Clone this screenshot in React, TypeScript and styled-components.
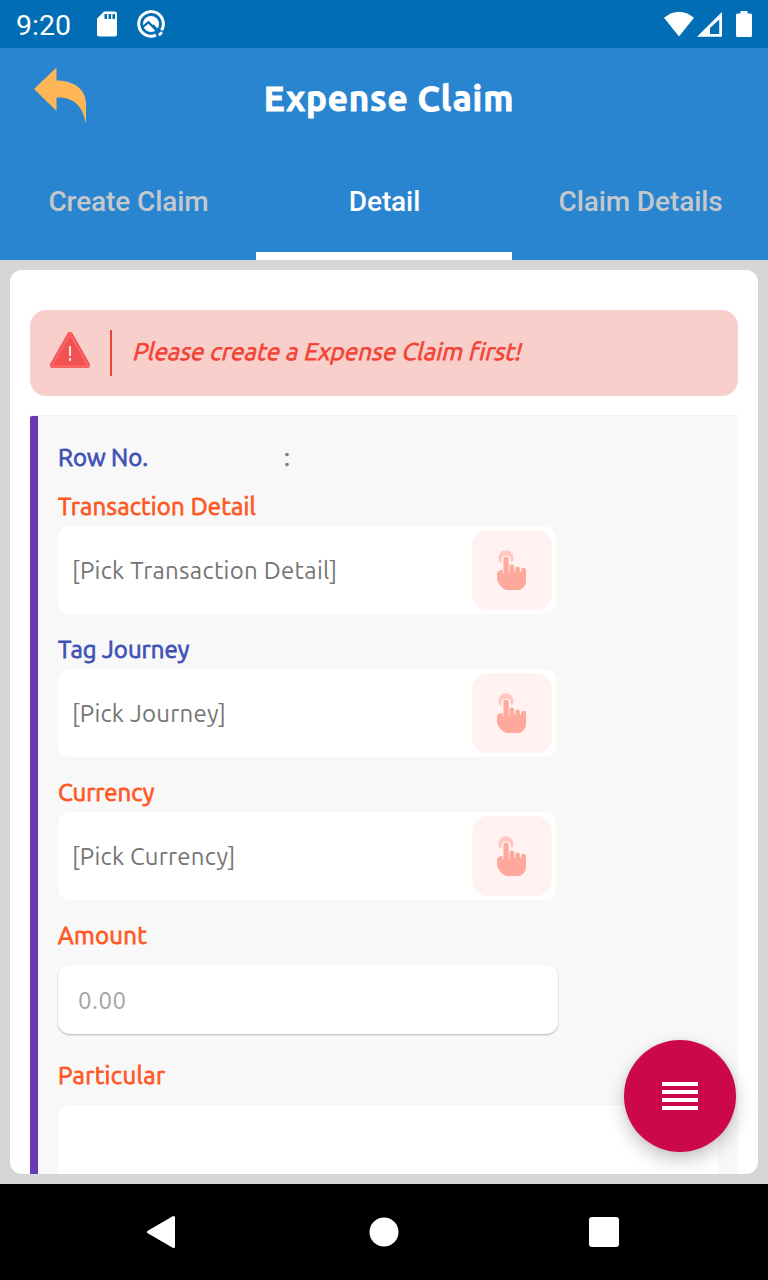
import React from "react";
import styled, { createGlobalStyle } from "styled-components";

const Global = createGlobalStyle`
  * { box-sizing: border-box; }
  body { margin: 0; background: #000; }
  button { border: 0; padding: 0; background: none; font: inherit; }
`;

const body = `"Ubuntu", "Noto Sans", sans-serif`;

const Screen = styled.div`
  width: 768px;
  height: 1280px;
  display: flex;
  flex-direction: column;
  overflow: hidden;
  font-family: ${body};
`;

const StatusBar = styled.header`
  height: 48px;
  flex: none;
  display: flex;
  align-items: center;
  justify-content: space-between;
  padding: 0 16px;
  background: #016db4;
  color: #fff;
`;

const StatusGroup = styled.div<{ $gap: number }>`
  display: flex;
  align-items: center;
  gap: ${(p) => p.$gap}px;
`;

const Clock = styled.span`
  width: 60px;
  font: 400 28.5px/34px Roboto, sans-serif;
  padding-top: 3px;
`;

const AssistantBadge = styled.svg`
  margin-left: -1px;
`;

const AppBar = styled.div`
  height: 100px;
  flex: none;
  display: grid;
  grid-template-columns: 120px 1fr 120px;
  align-items: center;
  background: #2a85d0;
`;

const BackButton = styled.button`
  margin: -6px 0 0 34px;
  width: 54px;
  height: 56px;
  svg { display: block; }
`;

const Title = styled.h1`
  margin: 0 0 0 10px;
  text-align: center;
  color: #fff;
  font-size: 35px;
  line-height: 48px;
  font-weight: 700;
  letter-spacing: 0.85px;
  -webkit-text-stroke: 0.9px #fff;
  white-space: nowrap;
`;

const Tabs = styled.nav`
  height: 112px;
  flex: none;
  display: grid;
  grid-template-columns: repeat(3, 1fr);
  background: #2a85d0;
`;

const Tab = styled.button<{ $active?: boolean }>`
  font: 500 28px/36px Roboto, sans-serif;
  letter-spacing: -0.1px;
  color: ${(p) => (p.$active ? "#fff" : "#c4c8cb")};
  border-bottom: 8px solid ${(p) => (p.$active ? "#fff" : "transparent")};
  padding: 3px 0 0 1px;
`;

const Content = styled.main`
  position: relative;
  flex: 1;
  min-height: 0;
  padding: 10px;
  background: #d6d6d6;
`;

const Card = styled.section`
  height: 100%;
  padding: 40px 20px 0;
  border-radius: 12px;
  background: #fff;
  overflow: hidden;
`;

const Alert = styled.div`
  height: 86px;
  display: flex;
  align-items: center;
  padding: 0 20px;
  border-radius: 16px;
  background: #f8cfca;
  svg { display: block; margin-top: -6px; }
`;

const AlertRule = styled.span`
  width: 2px;
  height: 46px;
  margin: 0 22px 0 20px;
  background: #f44336;
`;

const AlertText = styled.span`
  color: #f44336;
  font-size: 24px;
  line-height: 32px;
  letter-spacing: 0.24px;
  -webkit-text-stroke: 0.8px #f44336;
  white-space: nowrap;
  margin-top: -2px;
  transform: skewX(-14deg);
`;

const Form = styled.div`
  height: 900px;
  margin-top: 20px;
  padding: 26px 20px 0;
  border-left: 8px solid #673ab7;
  border-top-left-radius: 2px;
  background: #f8f8f8;
  box-shadow: 0 -1px 1px rgba(0, 0, 0, 0.06);
`;

const Row = styled.div`
  display: flex;
  height: 32px;
  margin-bottom: 17px;
`;

const Colon = styled.span`
  color: #757575;
  font-size: 24px;
  line-height: 32px;
  -webkit-text-stroke: 0.5px #757575;
`;

const Label = styled.label<{ $color: string; $track: number; $width?: number }>`
  display: block;
  height: 32px;
  width: ${(p) => (p.$width ? `${p.$width}px` : "auto")};
  color: ${(p) => p.$color};
  font-size: 24px;
  line-height: 32px;
  letter-spacing: ${(p) => p.$track}px;
  -webkit-text-stroke: 0.8px ${(p) => p.$color};
  white-space: nowrap;
`;

const Picker = styled.div`
  width: 498px;
  height: 88px;
  margin: 3px 0 20px;
  padding: 4px 4px 4px 14px;
  display: flex;
  align-items: center;
  justify-content: space-between;
  border-radius: 12px;
  background: #fff;
`;

const PickerText = styled.span<{ $track: number }>`
  color: #757575;
  font-size: 24px;
  line-height: 32px;
  padding-top: 2px;
  letter-spacing: ${(p) => p.$track}px;
  white-space: nowrap;
`;

const PickButton = styled.button`
  width: 80px;
  height: 80px;
  display: grid;
  place-items: center;
  border-radius: 16px;
  background: #fff2f0;
`;

const AmountInput = styled.div`
  width: 500px;
  height: 69px;
  margin: 13px 0 26px;
  padding: 2px 20px 0;
  display: flex;
  align-items: center;
  border-radius: 12px;
  background: #fff;
  box-shadow: 0 1px 2px rgba(0, 0, 0, 0.28);
  color: #a4a4a4;
  font-size: 24px;
  letter-spacing: 0.5px;
`;

const NoteInput = styled.div`
  width: 660px;
  height: 160px;
  margin-top: 13px;
  border-radius: 12px;
  background: #fff;
  box-shadow: 0 0 1px rgba(0, 0, 0, 0.12);
`;

const Fab = styled.button`
  position: absolute;
  right: 32px;
  bottom: 32px;
  width: 112px;
  height: 112px;
  display: grid;
  place-items: center;
  border-radius: 50%;
  background: #cc084b;
  box-shadow: 0 8px 18px rgba(0, 0, 0, 0.22), 0 0 4px rgba(0, 0, 0, 0.08);
`;

const NavBar = styled.footer`
  height: 96px;
  flex: none;
  display: grid;
  grid-template-columns: 30px 30px 32px;
  justify-content: space-between;
  align-items: center;
  padding: 0 148px 0 146px;
  background: #000;
`;

const HomeDot = styled.svg`
  margin-left: 2px;
`;

const TouchIcon = () => (
  <svg width="30" height="40" viewBox="0 0 30 40">
    <path d="M3 12.500A7.600 7.600 0 1 1 15 12.500L14 12V9A5 5 0 0 0 4.500 9V12Z" fill="#ffc8c0" />
    <path
      d="M6.500 9.300a2.600 2.600 0 0 1 5.200 0V23h0.800V16.800a2.300 2.300 0 0 1 4.600 0V21.500h1.200V18.800a2.300 2.300 0 0 1 4.600 0V22h1.200V20.200a2.450 2.450 0 0 1 4.900 0V32q-1 6-6.500 8H9Q1 36 0 29V23.500Q1 20 4.500 20H5.700V23.500H6.500Z"
      fill="#ffa99c"
    />
  </svg>
);

const RED = "#ff5722";
const BLUE = "#3f51b5";

const pickers = [
  { label: "Transaction Detail", color: RED, track: 0.22, text: "[Pick Transaction Detail]", textTrack: 0.29 },
  { label: "Tag Journey", color: BLUE, track: 0, text: "[Pick Journey]", textTrack: 0.23 },
  { label: "Currency", color: RED, track: 0, text: "[Pick Currency]", textTrack: 0.24 },
];

export default function App() {
  return (
    <Screen>
      <Global />
      <StatusBar>
        <StatusGroup $gap={20}>
          <Clock>9:20</Clock>
          <svg width="22" height="26" viewBox="0 0 22 26">
            <path d="M8 0.500H18.500Q21 0.500 21 3V23Q21 25.500 18.500 25.500H3.500Q1 25.500 1 23V7.500Z" fill="#fff" />
            <path d="M8.500 3h2.500v5H8.500zM12.500 3H15v5h-2.500zM16.500 3H19v5h-2.500z" fill="#016db4" />
          </svg>
          <AssistantBadge width="28" height="28" viewBox="0 0 28 28">
            <path d="M19 25.100A12.300 12.300 0 1 1 24.500 20.300" fill="none" stroke="#fff" strokeWidth="3" />
            <circle cx="14" cy="14" r="8" fill="#fff" />
            <path d="M5 17.500L11.500 12.300L19.500 20.500" fill="none" stroke="#016db4" strokeWidth="2.200" />
            <path d="M15.500 15L24.500 24" stroke="#016db4" strokeWidth="2.400" />
            <path d="M21.800 25.200l3.200-3" stroke="#fff" strokeWidth="2.800" />
          </AssistantBadge>
        </StatusGroup>
        <StatusGroup $gap={0}>
          <svg width="88" height="28" viewBox="664 10 88 28">
            <path d="M664 17.800Q679 5.500 694 17.800L679 36.500Z" fill="#fff" />
            <path d="M697 36.800L722 12V36.800ZM710 34H719.200V19.500L710 28Z" fill="#fff" fillRule="evenodd" />
            <path d="M740.500 11h7v2.500h3q1.500 0 1.500 1.500v20.500q0 1.500-1.500 1.500h-13q-1.500 0-1.500-1.500V15q0-1.500 1.500-1.500h3z" fill="#fff" />
          </svg>
        </StatusGroup>
      </StatusBar>

      <AppBar>
        <BackButton aria-label="Back">
          <svg width="54" height="56" viewBox="0 0 54 56">
            <path d="M0 22L22.500 0.500V13.500C41 13.500 52 23 52 37V55.500H51.500C49 39 39 29.500 22.500 30.500V44Z" fill="#ffb656" />
          </svg>
        </BackButton>
        <Title>Expense Claim</Title>
      </AppBar>

      <Tabs>
        <Tab>Create Claim</Tab>
        <Tab $active>Detail</Tab>
        <Tab>Claim Details</Tab>
      </Tabs>

      <Content>
        <Card>
          <Alert>
            <svg width="40" height="36" viewBox="0 0 40 36">
              <path d="M20 3L37 33H3Z" fill="#f05252" stroke="#f05252" strokeWidth="6" strokeLinejoin="round" />
              <path d="M20 1.500L38.500 34.500H1.500Z" fill="none" stroke="#fb6367" strokeWidth="2.400" strokeLinejoin="round" />
              <path d="M20 14v10M20 26v3" stroke="#f3e4ea" strokeWidth="2" />
            </svg>
            <AlertRule />
            <AlertText>Please create a Expense Claim first!</AlertText>
          </Alert>

          <Form>
            <Row>
              <Label $color={BLUE} $track={0} $width={226}>Row No.</Label>
              <Colon>:</Colon>
            </Row>
            {pickers.map((p) => (
              <React.Fragment key={p.label}>
                <Label $color={p.color} $track={p.track}>{p.label}</Label>
                <Picker>
                  <PickerText $track={p.textTrack}>{p.text}</PickerText>
                  <PickButton aria-label={p.label}>
                    <TouchIcon />
                  </PickButton>
                </Picker>
              </React.Fragment>
            ))}
            <Label $color={RED} $track={0.3}>Amount</Label>
            <AmountInput>0.00</AmountInput>
            <Label $color={RED} $track={0.4}>Particular</Label>
            <NoteInput />
          </Form>
        </Card>
        <Fab aria-label="Menu">
          <svg width="36" height="28" viewBox="0 0 36 28">
            <path d="M0 0h36v4H0zM0 8h36v4H0zM0 16h36v4H0zM0 24h36v4H0z" fill="#fff" />
          </svg>
        </Fab>
      </Content>

      <NavBar>
        <svg width="30" height="34" viewBox="0 0 30 34">
          <path d="M2.500 17L27.500 2.500V31.500Z" fill="#fff" stroke="#fff" strokeWidth="3" strokeLinejoin="round" />
        </svg>
        <HomeDot width="30" height="30" viewBox="0 0 30 30">
          <circle cx="15" cy="15" r="14.500" fill="#fff" />
        </HomeDot>
        <svg width="32" height="32" viewBox="0 0 32 32">
          <rect x="1" y="1" width="30" height="30" rx="3" fill="#fff" />
        </svg>
      </NavBar>
    </Screen>
  );
}
